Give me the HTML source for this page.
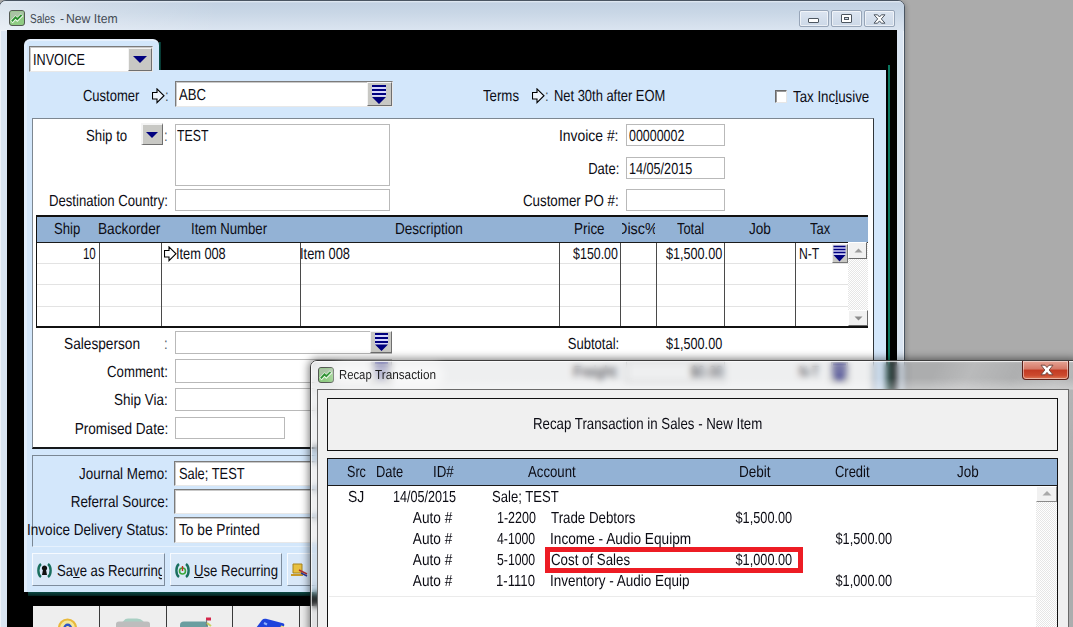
<!DOCTYPE html>
<html lang="en">
<head>
<meta charset="utf-8">
<title>Sales - New Item</title>
<style>
html,body{margin:0;padding:0;}
body{width:1073px;height:627px;overflow:hidden;background:#ababab;position:relative;font-family:"Liberation Sans",sans-serif;color:#111;}
div,span,svg{position:absolute;box-sizing:border-box;}
.t{white-space:pre;color:#0c0c14;font-size:16px;line-height:20px;text-rendering:geometricPrecision;}
.t u{text-decoration:underline;text-underline-offset:1px;}
.seg{font-family:"Liberation Sans","DejaVu Sans",sans-serif;}
/* sales window */
#sw{left:-1px;top:0;width:906px;height:640px;border:1px solid #4a5562;border-radius:7px 7px 0 0;background:#dae5f2;overflow:hidden;box-shadow:inset 0 0 0 1px rgba(255,255,255,.55),1px 1px 5px rgba(0,0,0,.22);}
#sw .tb{left:0;top:0;width:904px;height:30px;background:linear-gradient(#e6edf5 0,#c2d1e2 2px,#c9d7e6 40%,#d4dfec 75%,#dbe5f1 100%);}
#blk{left:7px;top:30px;width:890px;height:600px;background:#000;}
.lb{background:#d3e7fb;}
.fld{background:#fff;border:1px solid #b9b9b9;}
.sunk{background:#fff;border:1px solid;border-color:#7b7b7b #e8e8e8 #e8e8e8 #7b7b7b;box-shadow:inset 1px 1px 0 #c9c9c9;}
.btn3d{background:#c8c8c4;border:1px solid;border-color:#f4f4f4 #6f6f6f #6f6f6f #f4f4f4;}
.hdr{background:#93b2d5;}
.vl{width:1px;background:#4a4a4a;}
.hl{height:1px;background:#e3e3e3;}
.dots{background-image:repeating-conic-gradient(#fff 0 25%,#e6e6e6 0 50%);background-size:2px 2px;}
.fbtn{background:#d9e8f8;border:1px solid;border-color:#f6faff #7d8c9d #7d8c9d #f6faff;}
</style>
</head>
<body>
<div id="sales" style="left:0;top:0;width:1073px;height:627px;">
  <div id="sw"><div class="tb"></div><div style="left:0;top:1px;width:220px;height:29px;background:linear-gradient(90deg,rgba(255,255,255,.42),rgba(255,255,255,.18) 45%,rgba(255,255,255,0));"></div></div>
  <div id="blk"></div>
  <!-- tab + panel -->
  <div class="lb" style="left:24px;top:39px;width:135px;height:40px;border-radius:6px 6px 0 0;border-top:2px solid #e6f0fc;border-left:3px solid #e1eefc;"></div>
  <div style="left:159px;top:42px;width:2px;height:28px;background:linear-gradient(90deg,#0d5a50,#06302b);"></div>
  <div class="lb" style="left:24px;top:70px;width:862px;height:522px;border-left:3px solid #e1eefc;"></div>
  <div style="left:888px;top:65px;width:2px;height:531px;background:#0b775f;"></div>
  <div style="left:28px;top:592px;width:862px;height:4px;background:linear-gradient(#0c4a44,#04201e);"></div>
  <!-- INVOICE combo -->
  <div class="sunk" style="left:29px;top:46px;width:124px;height:26px;"></div>
  <div class="btn3d" style="left:128px;top:48px;width:24px;height:23px;"></div>
  <svg style="left:132px;top:55px" width="16" height="9" viewBox="0 0 16 9"><path d="M1 1h14l-7 7z" fill="#00007e"/></svg>
  <!-- customer -->
  <svg style="left:152px;top:88px" width="13" height="16" viewBox="0 0 13 16"><path d="M.5 4.500H5V.900L12 7.750 5 14.600V11H.5z" fill="#eef5fd" stroke="#000" stroke-width="1.100" stroke-linejoin="miter"/></svg>
  <span class="t" style="left:164.500px;top:87px;transform-origin:0 50%;transform:scaleX(.82);color:#4a5360;">:</span>
  <div class="sunk" style="left:175px;top:81px;width:218px;height:26px;"></div>
  <div class="btn3d" style="left:367px;top:82px;width:25px;height:24px;"></div>
  <svg style="left:371px;top:84px" width="17" height="21" viewBox="0 0 17 21"><path d="M1 3h14v2H1zM1 7h14v2H1zM1 11h14v1.500H1z" fill="#d6d6fb"/><path d="M1 1h14v2H1zM1 5h14v2H1zM1 9h14v2H1zM1 13h14l-7 7z" fill="#00007e"/></svg>
  <!-- terms arrow -->
  <svg style="left:532px;top:88px" width="13" height="16" viewBox="0 0 13 16"><path d="M.5 4.500H5V.900L12 7.750 5 14.600V11H.5z" fill="#eef5fd" stroke="#000" stroke-width="1.100" stroke-linejoin="miter"/></svg>
  <!-- tax inclusive checkbox -->
  <div style="left:775px;top:90px;width:12px;height:13px;background:#fff;border:1px solid;border-color:#6b6b6b #e6e6e6 #e6e6e6 #6b6b6b;box-shadow:inset 1px 1px 0 #9a9a9a;"></div>
  <!-- white panel -->
  <div style="left:32px;top:118px;width:842px;height:331px;background:#fff;border:1px solid;border-color:#7d8791 #30353a #15181b #7d8791;border-bottom-width:2px;"></div>
  <div class="btn3d" style="left:141px;top:123px;width:22px;height:22px;border-width:2px 1px 1px 2px;"></div>
  <svg style="left:145px;top:130.500px" width="14" height="8" viewBox="0 0 14 8"><path d="M1 1h12l-6 6z" fill="#00007e"/></svg>
  <div class="fld" style="left:175px;top:124px;width:215px;height:62px;"></div>
  <div class="fld" style="left:175px;top:189px;width:215px;height:22px;"></div>
  <div class="fld" style="left:626px;top:124px;width:99px;height:22px;"></div>
  <div class="fld" style="left:626px;top:157px;width:99px;height:22px;"></div>
  <div class="fld" style="left:626px;top:189px;width:99px;height:22px;"></div>
  <!-- sales table -->
  <div style="left:36px;top:215px;width:832px;height:113px;background:#fff;border:1px solid #111;border-width:2px 0 2px 1px;"></div>
  <div style="left:867px;top:217px;width:1px;height:42px;background:#3c3c3c;"></div>
  <div class="hdr" style="left:37px;top:217px;width:831px;height:25px;"></div>
  <div style="left:37px;top:242px;width:811px;height:1px;background:#1a1a1a;"></div>
  <div class="hl" style="left:37px;top:263px;width:811px;"></div>
  <div class="hl" style="left:37px;top:284px;width:811px;"></div>
  <div class="hl" style="left:37px;top:306px;width:811px;"></div>
  <div class="vl" style="left:99px;top:243px;height:83px;"></div>
  <div class="vl" style="left:161px;top:243px;height:83px;"></div>
  <div class="vl" style="left:300px;top:243px;height:83px;"></div>
  <div class="vl" style="left:559px;top:243px;height:83px;"></div>
  <div class="vl" style="left:620px;top:243px;height:83px;"></div>
  <div class="vl" style="left:656px;top:243px;height:83px;"></div>
  <div class="vl" style="left:724px;top:243px;height:83px;"></div>
  <div class="vl" style="left:795px;top:243px;height:83px;"></div>
  <div style="left:622px;top:219px;width:33px;height:20px;overflow:hidden;"><span class="t" style="left:-5.300px;top:1px;transform-origin:0 50%;transform:scaleX(.9);">Disc%</span></div>
  <svg style="left:164px;top:246px" width="13" height="16" viewBox="0 0 13 16"><path d="M.5 4.500H5V.900L12 7.750 5 14.600V11H.5z" fill="#fff" stroke="#000" stroke-width="1.100" stroke-linejoin="miter"/></svg>
  <!-- tax dropdown + scrollbar -->
  <div style="left:832px;top:244px;width:16px;height:19px;background:#c8c8c4;border:1px solid;border-color:#efefef #777 #777 #efefef;"></div>
  <svg style="left:832px;top:244px" width="15" height="19" viewBox="0 0 15 19"><path d="M1.500 1.500h12v9.500h-12z" fill="#cfcff8"/><path d="M1.500 1.800h12v1.400h-12zM1.500 4.800h12v1.400h-12zM1.500 7.800h12v1.400h-12zM1.500 11h12l-6 6.500z" fill="#00007e"/></svg>
  <div class="dots" style="left:848px;top:243px;width:20px;height:83px;"></div>
  <div style="left:848px;top:242px;width:19px;height:17px;background:#f1f1f1;border:1px solid;border-color:#fff #6a6a6a #6a6a6a #fff;"></div>
  <svg style="left:853.500px;top:247.500px" width="9" height="5" viewBox="0 0 9 5"><path d="M.5 4.500h8l-4-4z" fill="#9c9c9c"/></svg>
  <div style="left:848px;top:310px;width:20px;height:16px;background:#f1f1f1;border:1px solid;border-color:#fff #6a6a6a #6a6a6a #fff;"></div>
  <svg style="left:853.500px;top:316px" width="9" height="5" viewBox="0 0 9 5"><path d="M.5 .5h8l-4 4z" fill="#8c8c8c"/></svg>
  <!-- lower fields -->
  <div class="fld" style="left:175px;top:331px;width:217px;height:23px;"></div>
  <div class="btn3d" style="left:370px;top:331px;width:22px;height:22px;"></div>
  <svg style="left:373.500px;top:332px" width="16" height="20" viewBox="0 0 16 20"><path d="M1 3h13v2H1zM1 7h13v2H1zM1 11h13v1.500H1z" fill="#d6d6fb"/><path d="M1 1h13v2H1zM1 5h13v2H1zM1 9h13v2H1zM1 12.500h13l-6.500 6.500z" fill="#00007e"/></svg>
  <div class="fld" style="left:175px;top:359px;width:217px;height:24px;"></div>
  <div class="btn3d" style="left:370px;top:360px;width:22px;height:22px;"></div>
  <svg style="left:373.500px;top:361px" width="16" height="20" viewBox="0 0 16 20"><path d="M1 1h13v2H1zM1 5h13v2H1zM1 9h13v2H1zM1 12.500h13l-6.500 6.500z" fill="#00007e"/></svg>
  <div class="fld" style="left:175px;top:388px;width:217px;height:23px;"></div>
  <div class="fld" style="left:175px;top:417px;width:110px;height:22px;"></div>
  <!-- freight row (visible only blurred through glass) -->
  <div class="fld" style="left:626px;top:361px;width:99px;height:22px;"></div>
  <div style="left:831px;top:362px;width:17px;height:21px;background:#c6c6c6;border:1px solid #999;"></div>
  <svg style="left:832px;top:363px" width="15" height="19" viewBox="0 0 15 19"><path d="M1 0.5h13v2H1zM1 4.5h13v2H1zM1 8.5h13v2H1zM1 12h13l-6.5 6z" fill="#00007e"/></svg>
  <!-- sub panel -->
  <div style="left:32px;top:455px;width:842px;height:92px;border:1px solid;border-color:#7a8794 #e6f1fd #e6f1fd #7a8794;"></div>
  <div class="sunk" style="left:174px;top:461px;width:301px;height:25px;"></div>
  <div class="sunk" style="left:174px;top:489px;width:301px;height:25px;"></div>
  <div class="sunk" style="left:174px;top:517px;width:301px;height:26px;"></div>
  <!-- buttons -->
  <div class="fbtn" style="left:32px;top:553px;width:133px;height:33px;"></div>
  <div style="left:33px;top:554px;width:129px;height:31px;overflow:hidden;">
    <span class="t" style="left:23.700px;top:8px;transform-origin:0 50%;transform:scaleX(.821);">Sa<u>v</u>e as Recurring</span>
  </div>
  <div class="fbtn" style="left:170px;top:553px;width:112px;height:33px;overflow:hidden;">
    <span class="t" style="left:23.400px;top:8px;transform-origin:0 50%;transform:scaleX(.821);"><u>U</u>se Recurring</span>
  </div>
  <div class="fbtn" style="left:287px;top:553px;width:112px;height:33px;"></div>
  <svg style="left:36px;top:562px" width="17" height="17" viewBox="0 0 17 17"><path d="M5 2C1.5 4.5 1.5 12.5 5 15M12 2c3.500 2.500 3.500 10.500 0 13" fill="none" stroke="#1a6f5f" stroke-width="2.400"/><path d="M8.500 3.500a2.600 2.600 0 0 1 1.600 4.700l.9 4.800h-5l.9-4.800a2.600 2.600 0 0 1 1.600-4.700z" fill="#111"/></svg>
  <svg style="left:174px;top:562px" width="17" height="17" viewBox="0 0 17 17"><path d="M5 2C1.5 4.500 1.500 12.500 5 15M12 2c3.500 2.500 3.500 10.500 0 13" fill="none" stroke="#1a6f5f" stroke-width="2.400"/><circle cx="8.500" cy="9" r="3" fill="none" stroke="#3aa83a" stroke-width="1.600"/><path d="M8.500 4v5" stroke="#c03020" stroke-width="1.400"/></svg>
  <svg style="left:290px;top:561px" width="20" height="18" viewBox="0 0 20 18"><path d="M3 3h9v9H3z" fill="#e8c040" stroke="#a8841c"/><path d="M1 13h12v2H1z" fill="#c89a28"/><path d="M9 9l8 4" stroke="#b03030" stroke-width="1.500"/><path d="M11 12l6 3" stroke="#2a3a9a" stroke-width="1.500"/></svg>
  <!-- bottom toolbar -->
  <div style="left:33px;top:606px;width:600px;height:30px;background:#eeeeee;"></div>
  <div style="left:99px;top:606px;width:1px;height:30px;background:#3a3a3a;"></div>
  <div style="left:166px;top:606px;width:1px;height:30px;background:#3a3a3a;"></div>
  <div style="left:232px;top:606px;width:1px;height:30px;background:#3a3a3a;"></div>
  <div style="left:299px;top:606px;width:1px;height:30px;background:#3a3a3a;"></div>
  <svg style="left:56px;top:616px" width="24" height="12" viewBox="0 0 24 12"><circle cx="11.500" cy="12" r="8.500" fill="#f3e79a" stroke="#e8b93c" stroke-width="2.200"/><path d="M8.500 12a3.200 3.200 0 0 1 6.400 0" fill="none" stroke="#2b55c8" stroke-width="2.400"/></svg>
  <svg style="left:114px;top:616px" width="38" height="12" viewBox="0 0 38 12"><path d="M10 4.500q1-2 4-2h9q4 0 6 2.500l1 1.500H8z" fill="#a9cfc3"/><path d="M2 11V8q0-2.500 3-2.500h28q3 0 3 2.500v3z" fill="#bdbdbd"/></svg>
  <svg style="left:178px;top:614px" width="38" height="14" viewBox="0 0 38 14"><path d="M2 14v-3q0-3.500 4-3.500h20q4 0 4 3.500v3z" fill="#6a9ea0"/><path d="M28 3.500h5v3h-5z" fill="#d4264a"/><path d="M28.500 6v6" stroke="#7a7a7a" stroke-width="1.200"/><path d="M29 9l4 3" stroke="#c8d060" stroke-width="2"/></svg>
  <svg style="left:254px;top:615px" width="36" height="13" viewBox="0 0 36 13"><path d="M2 13l6-8q1.500-1.800 4-1.200l17 4.500q2 .7 1 2.700l-1 2z" fill="#1f43dc"/><path d="M10 8l3 1.500" stroke="#8fb2ff" stroke-width="2"/><path d="M27 10.500l3 .8-.8 1.700h-3z" fill="#e6e27a"/></svg>
  <!-- title -->
  <svg style="left:9px;top:10px" width="17" height="17" viewBox="0 0 17 17"><rect x=".5" y=".5" width="15" height="15" rx="2.500" fill="#8fcb82" stroke="#535853"/><path d="M1.500 1.500h13v5.500l-13 3z" fill="#a9c3a4"/><path d="M2.500 12l4-4.300 1.800 1.800 4.700-4.800" fill="none" stroke="#f2fbef" stroke-width="3.400"/><path d="M2.800 11.300l3.700-3.900 1.800 1.800 4.300-4.400" fill="none" stroke="#2a8f2e" stroke-width="1.900"/></svg>
    <!-- caption buttons -->
  <div style="left:799px;top:10px;width:30px;height:17px;border:1px solid #97a5b8;border-radius:2px;background:linear-gradient(#dce5f1,#ccd8e7);box-shadow:inset 0 0 0 1px rgba(255,255,255,.6);"></div>
  <div style="left:831px;top:10px;width:31px;height:17px;border:1px solid #97a5b8;border-radius:2px;background:linear-gradient(#dce5f1,#ccd8e7);box-shadow:inset 0 0 0 1px rgba(255,255,255,.6);"></div>
  <div style="left:864px;top:10px;width:31px;height:17px;border:1px solid #97a5b8;border-radius:2px;background:linear-gradient(#dce5f1,#ccd8e7);box-shadow:inset 0 0 0 1px rgba(255,255,255,.6);"></div>
  <div style="left:808px;top:18px;width:11px;height:5px;border:1px solid #4d5660;background:#fff;border-radius:1px;"></div>
  <div style="left:841px;top:14px;width:11px;height:9px;border:1px solid #4d5660;background:#fff;border-radius:1px;"></div>
  <div style="left:844px;top:17px;width:5px;height:3px;border:1px solid #4d5660;background:#cfd9e4;"></div>
  <svg style="left:873px;top:14px" width="13" height="10" viewBox="0 0 13 10"><path d="M1 .8h3.600l1.900 2.200L8.400 .8H12L8.300 4.900 12 9.200H8.400L6.500 6.900 4.600 9.200H1l3.700-4.300z" fill="#fff" stroke="#4d5660" stroke-width="1"/></svg>
<span class="t" style="top:51px;left:32.61px;transform-origin:0 50%;transform:scaleX(0.7892);">INVOICE</span>
<span class="t" style="top:87px;left:83.40px;transform-origin:0 50%;transform:scaleX(0.8112);">Customer</span>
<span class="t" style="top:86px;left:179.20px;transform-origin:0 50%;transform:scaleX(0.8193);">ABC</span>
<span class="t" style="top:87px;left:483.30px;transform-origin:0 50%;transform:scaleX(0.8265);">Terms</span>
<span class="t" style="top:87px;left:544.88px;transform-origin:0 50%;transform:scaleX(0.8200);color:#4a5360;">:</span>
<span class="t" style="top:87px;left:553.69px;transform-origin:0 50%;transform:scaleX(0.8073);">Net 30th after EOM</span>
<span class="t" style="top:88px;left:793.10px;transform-origin:0 50%;transform:scaleX(0.8321);">Tax Inc<u>l</u>usive</span>
<span class="t" style="top:127px;left:86.25px;transform-origin:0 50%;transform:scaleX(0.8264);">Ship to</span>
<span class="t" style="top:127px;left:163.98px;transform-origin:0 50%;transform:scaleX(0.8200);color:#59606a;">:</span>
<span class="t" style="top:127px;left:177.40px;transform-origin:0 50%;transform:scaleX(0.7685);">TEST</span>
<span class="t" style="top:192px;right:904.81px;transform-origin:100% 50%;transform:scaleX(0.8210);">Destination Country:</span>
<span class="t" style="top:127px;right:454.14px;transform-origin:100% 50%;transform:scaleX(0.8692);">Invoice #:</span>
<span class="t" style="top:127px;left:629.40px;transform-origin:0 50%;transform:scaleX(0.7771);">00000002</span>
<span class="t" style="top:160px;right:454.23px;transform-origin:100% 50%;transform:scaleX(0.8129);">Date:</span>
<span class="t" style="top:160px;left:629.21px;transform-origin:0 50%;transform:scaleX(0.7893);">14/05/2015</span>
<span class="t" style="top:192px;right:454.19px;transform-origin:100% 50%;transform:scaleX(0.8353);">Customer PO #:</span>
<span class="t" style="top:220px;left:54.20px;transform-origin:0 50%;transform:scaleX(0.8187);">Ship</span>
<span class="t" style="top:220px;left:98.45px;transform-origin:0 50%;transform:scaleX(0.8541);">Backorder</span>
<span class="t" style="top:220px;left:191.38px;transform-origin:0 50%;transform:scaleX(0.8227);">Item Number</span>
<span class="t" style="top:220px;left:394.75px;transform-origin:0 50%;transform:scaleX(0.8473);">Description</span>
<span class="t" style="top:220px;left:573.66px;transform-origin:0 50%;transform:scaleX(0.8381);">Price</span>
<span class="t" style="top:220px;left:677.00px;transform-origin:0 50%;transform:scaleX(0.8032);">Total</span>
<span class="t" style="top:220px;left:748.50px;transform-origin:0 50%;transform:scaleX(0.8495);">Job</span>
<span class="t" style="top:220px;left:810.20px;transform-origin:0 50%;transform:scaleX(0.8073);">Tax</span>
<span class="t" style="top:245px;right:976.87px;transform-origin:100% 50%;transform:scaleX(0.7220);">10</span>
<span class="t" style="top:245px;left:175.90px;transform-origin:0 50%;transform:scaleX(0.7986);">Item 008</span>
<span class="t" style="top:245px;left:300.45px;transform-origin:0 50%;transform:scaleX(0.8026);">Item 008</span>
<span class="t" style="top:245px;right:454.78px;transform-origin:100% 50%;transform:scaleX(0.7732);">$150.00</span>
<span class="t" style="top:245px;right:350.38px;transform-origin:100% 50%;transform:scaleX(0.7898);">$1,500.00</span>
<span class="t" style="top:245px;left:798.94px;transform-origin:0 50%;transform:scaleX(0.7611);">N-T</span>
<span class="t" style="top:335px;right:454.02px;transform-origin:100% 50%;transform:scaleX(0.8151);">Subtotal:</span>
<span class="t" style="top:335px;right:350.38px;transform-origin:100% 50%;transform:scaleX(0.7898);">$1,500.00</span>
<span class="t" style="top:335px;left:63.90px;transform-origin:0 50%;transform:scaleX(0.8552);">Salesperson</span>
<span class="t" style="top:335px;left:163.98px;transform-origin:0 50%;transform:scaleX(0.8200);color:#59606a;">:</span>
<span class="t" style="top:363px;right:904.81px;transform-origin:100% 50%;transform:scaleX(0.8224);">Comment:</span>
<span class="t" style="top:391px;right:904.78px;transform-origin:100% 50%;transform:scaleX(0.8426);">Ship Via:</span>
<span class="t" style="top:420px;right:904.77px;transform-origin:100% 50%;transform:scaleX(0.8486);">Promised Date:</span>
<span class="t" style="top:465px;right:904.79px;transform-origin:100% 50%;transform:scaleX(0.8383);">Journal Memo:</span>
<span class="t" style="top:465px;left:178.50px;transform-origin:0 50%;transform:scaleX(0.8046);">Sale; TEST</span>
<span class="t" style="top:493px;right:904.79px;transform-origin:100% 50%;transform:scaleX(0.8396);">Referral Source:</span>
<span class="t" style="top:521px;right:904.78px;transform-origin:100% 50%;transform:scaleX(0.8438);">Invoice Delivery Status:</span>
<span class="t" style="top:521px;left:179.40px;transform-origin:0 50%;transform:scaleX(0.8567);">To be Printed</span>
<span class="t" style="top:363px;right:453.97px;transform-origin:100% 50%;transform:scaleX(0.8495);">Freight:</span>
<span class="t" style="top:363px;right:350.38px;transform-origin:100% 50%;transform:scaleX(0.8097);">$0.00</span>
<span class="t" style="top:363px;left:798.94px;transform-origin:0 50%;transform:scaleX(0.7611);">N-T</span>
<span class="t" style="top:9px;font-size:13px;left:29.50px;transform-origin:0 50%;transform:scaleX(0.7723);color:#434a53;">Sales</span>
<span class="t" style="top:9px;font-size:13px;left:60.00px;transform-origin:0 50%;transform:scaleX(0.9375);color:#434a53;">-</span>
<span class="t" style="top:9px;font-size:13px;left:66.06px;transform-origin:0 50%;transform:scaleX(0.9402);color:#434a53;">New Item</span>
</div>

<!-- Recap window -->
<div id="recap" style="left:0;top:0;width:1073px;height:627px;">
  <div style="left:310px;top:360px;width:770px;height:280px;border-radius:7px 7px 0 0;border:1px solid #3c3c3c;box-shadow:0 0 8px 1px rgba(0,0,0,.55);"></div>
  <div id="glass" style="left:311px;top:361px;width:768px;height:279px;border-radius:6px 6px 0 0;backdrop-filter:blur(3px);-webkit-backdrop-filter:blur(3px);background:linear-gradient(rgba(255,255,255,.18) 0,rgba(255,255,255,0) 3px,rgba(255,255,255,0) 17px,rgba(255,255,255,.30) 28px,rgba(255,255,255,0) 29px),linear-gradient(115deg,rgba(255,255,255,0) 70%,rgba(255,255,255,.16) 74%,rgba(255,255,255,.02) 79%,rgba(255,255,255,.14) 84%,rgba(255,255,255,0) 90%),rgba(180,182,187,.225);box-shadow:inset 0 0 0 1px rgba(255,255,255,.7);"></div>
  <!-- client -->
  <div style="left:317px;top:389px;width:752px;height:250px;background:#f0f0f0;border:1px solid #6a6a6a;"></div>
  <svg style="left:318px;top:367px" width="17" height="17" viewBox="0 0 17 17"><rect x=".5" y=".5" width="15" height="15" rx="2.500" fill="#8fcb82" stroke="#535853"/><path d="M1.500 1.500h13v5.500l-13 3z" fill="#a9c3a4"/><path d="M2.500 12l4-4.300 1.800 1.800 4.700-4.800" fill="none" stroke="#f2fbef" stroke-width="3.400"/><path d="M2.800 11.300l3.700-3.900 1.800 1.800 4.300-4.400" fill="none" stroke="#2a8f2e" stroke-width="1.900"/></svg>
    <div style="left:332px;top:363px;width:112px;height:24px;border-radius:12px;background:rgba(255,255,255,.55);filter:blur(5px);"></div>
  <!-- close -->
  <div style="left:1022px;top:361px;width:47px;height:19px;border:1px solid #5a2018;border-top:none;border-radius:0 0 4px 4px;background:linear-gradient(#e6a596 0,#d47866 45%,#c23a22 50%,#cc4a2e 80%,#dd7a58 100%);box-shadow:inset 0 0 0 1px rgba(255,255,255,.45);"></div>
  <svg style="left:1040px;top:364px" width="14" height="12" viewBox="0 0 14 12"><path d="M1 1.200h4l2 2.300 2-2.300h4L9.200 6 13 10.800H9L7 8.400 5 10.800H1L4.800 6z" fill="#fff" stroke="#6a4038" stroke-width=".9"/></svg>
  <!-- banner -->
  <div style="left:327px;top:398px;width:731px;height:53px;border:1px solid #111;background:#f0f0f0;"></div>
  <!-- table -->
  <div style="left:327px;top:458px;width:731px;height:190px;background:#fff;border:1px solid #111;"></div>
  <div class="hdr" style="left:328px;top:459px;width:729px;height:26px;"></div>
  <div style="left:328px;top:485px;width:729px;height:1px;background:#1a1a1a;"></div>
  <div class="dots" style="left:1036px;top:486px;width:21px;height:150px;"></div>
  <div style="left:1036px;top:486px;width:21px;height:16px;background:#f1f1f1;border:1px solid;border-color:#fff #8a8a8a #8a8a8a #fff;"></div>
  <svg style="left:1042px;top:490px" width="10" height="6" viewBox="0 0 10 6"><path d="M0.5 5.5h9l-4.5-4.5z" fill="#a9a9a9"/></svg>
  <div style="left:329px;top:596px;width:707px;height:1px;background:#ebebeb;"></div>
  <div style="left:545px;top:547px;width:258px;height:26px;border:5px solid #ed1c24;"></div>
<span class="t" style="top:415px;left:532.97px;transform-origin:0 50%;transform:scaleX(0.8290);">Recap Transaction in Sales - New Item</span>
<span class="t" style="top:463px;left:346.65px;transform-origin:0 50%;transform:scaleX(0.7854);">Src</span>
<span class="t" style="top:463px;left:376.44px;transform-origin:0 50%;transform:scaleX(0.8055);">Date</span>
<span class="t" style="top:463px;left:433.42px;transform-origin:0 50%;transform:scaleX(0.8333);">ID#</span>
<span class="t" style="top:463px;left:527.80px;transform-origin:0 50%;transform:scaleX(0.8241);">Account</span>
<span class="t" style="top:463px;left:738.90px;transform-origin:0 50%;transform:scaleX(0.8467);">Debit</span>
<span class="t" style="top:463px;left:835.25px;transform-origin:0 50%;transform:scaleX(0.8095);">Credit</span>
<span class="t" style="top:463px;left:956.50px;transform-origin:0 50%;transform:scaleX(0.8398);">Job</span>
<span class="t" style="top:488px;left:348.30px;transform-origin:0 50%;transform:scaleX(0.8743);">SJ</span>
<span class="t" style="top:488px;right:616.48px;transform-origin:100% 50%;transform:scaleX(0.7881);">14/05/2015</span>
<span class="t" style="top:488px;left:492.00px;transform-origin:0 50%;transform:scaleX(0.8180);">Sale; TEST</span>
<span class="t" style="top:509px;right:620.59px;transform-origin:100% 50%;transform:scaleX(0.8520);">Auto #</span>
<span class="t" style="top:509px;left:496.52px;transform-origin:0 50%;transform:scaleX(0.7808);">1-2200</span>
<span class="t" style="top:509px;left:551.20px;transform-origin:0 50%;transform:scaleX(0.8311);">Trade Debtors</span>
<span class="t" style="top:530px;right:620.59px;transform-origin:100% 50%;transform:scaleX(0.8520);">Auto #</span>
<span class="t" style="top:530px;left:497.30px;transform-origin:0 50%;transform:scaleX(0.7652);">4-1000</span>
<span class="t" style="top:530px;left:550.35px;transform-origin:0 50%;transform:scaleX(0.8532);">Income - Audio Equipm</span>
<span class="t" style="top:551px;right:620.59px;transform-origin:100% 50%;transform:scaleX(0.8520);">Auto #</span>
<span class="t" style="top:551px;left:497.30px;transform-origin:0 50%;transform:scaleX(0.7652);">5-1000</span>
<span class="t" style="top:551px;left:551.20px;transform-origin:0 50%;transform:scaleX(0.8313);">Cost of Sales</span>
<span class="t" style="top:572px;right:620.59px;transform-origin:100% 50%;transform:scaleX(0.8520);">Auto #</span>
<span class="t" style="top:572px;left:496.48px;transform-origin:0 50%;transform:scaleX(0.8207);">1-1110</span>
<span class="t" style="top:572px;left:550.36px;transform-origin:0 50%;transform:scaleX(0.8433);">Inventory - Audio Equip</span>
<span class="t" style="top:509px;right:280.83px;transform-origin:100% 50%;transform:scaleX(0.7961);">$1,500.00</span>
<span class="t" style="top:551px;right:280.83px;transform-origin:100% 50%;transform:scaleX(0.7961);">$1,000.00</span>
<span class="t" style="top:530px;right:181.08px;transform-origin:100% 50%;transform:scaleX(0.7961);">$1,500.00</span>
<span class="t" style="top:572px;right:181.08px;transform-origin:100% 50%;transform:scaleX(0.7961);">$1,000.00</span>
<span class="t" style="top:365px;font-size:13px;left:338.73px;transform-origin:0 50%;transform:scaleX(0.8694);color:#1e1e1e;">Recap</span>
<span class="t" style="top:365px;font-size:13px;left:375.00px;transform-origin:0 50%;transform:scaleX(0.9039);color:#1e1e1e;">Transaction</span>
</div>
</body>
</html>
